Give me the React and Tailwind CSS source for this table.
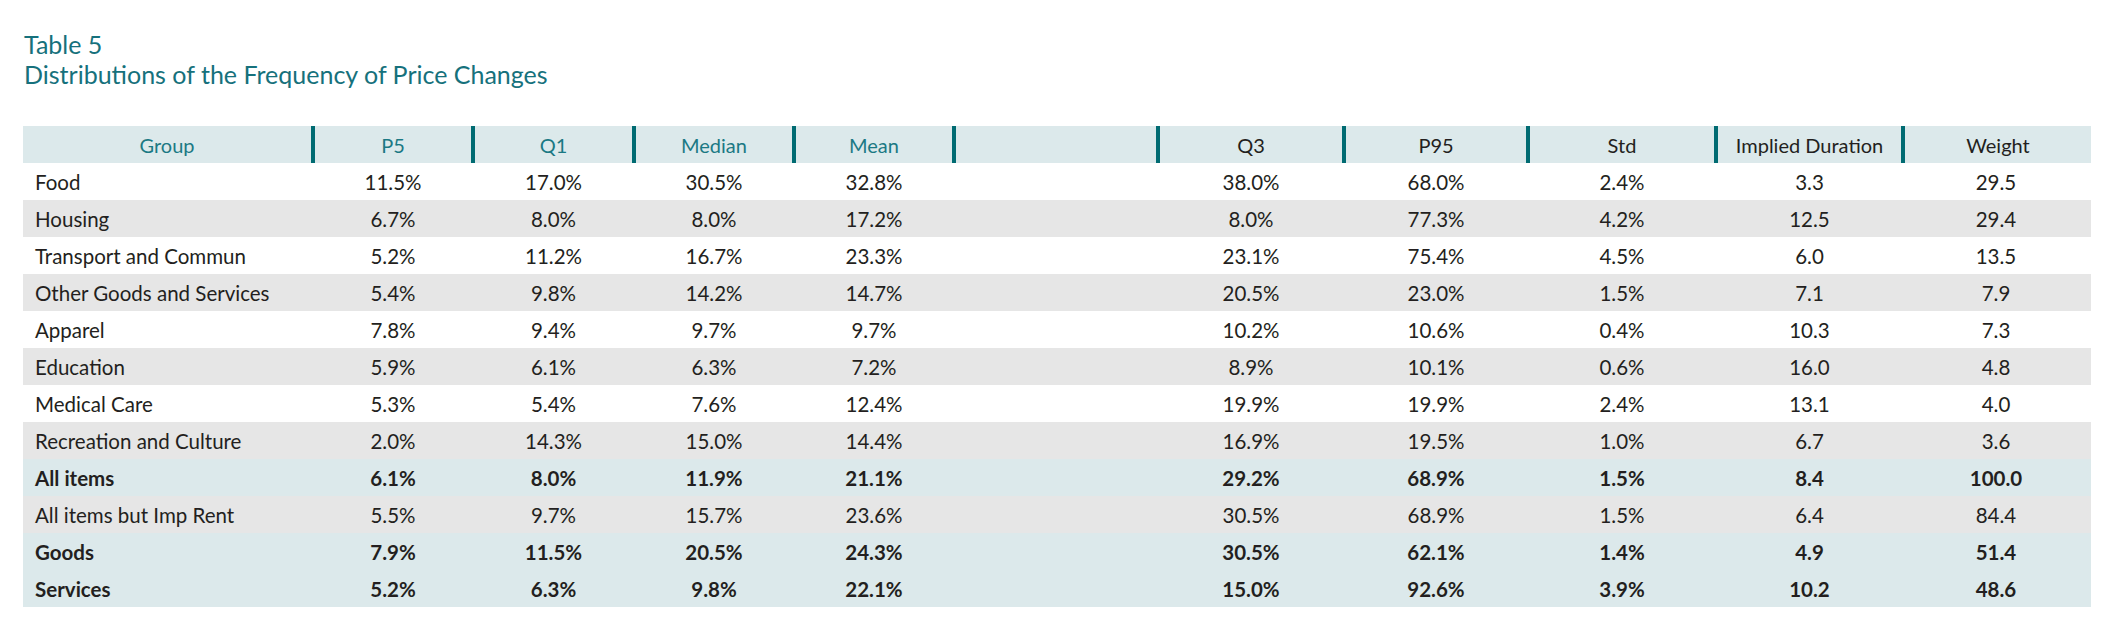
import React from "react";

const rows = [
  { g: "Food", v: ["11.5%", "17.0%", "30.5%", "32.8%", "38.0%", "68.0%", "2.4%", "3.3", "29.5"], bg: "white" },
  { g: "Housing", v: ["6.7%", "8.0%", "8.0%", "17.2%", "8.0%", "77.3%", "4.2%", "12.5", "29.4"], bg: "gray" },
  { g: "Transport and Commun", v: ["5.2%", "11.2%", "16.7%", "23.3%", "23.1%", "75.4%", "4.5%", "6.0", "13.5"], bg: "white" },
  { g: "Other Goods and Services", v: ["5.4%", "9.8%", "14.2%", "14.7%", "20.5%", "23.0%", "1.5%", "7.1", "7.9"], bg: "gray" },
  { g: "Apparel", v: ["7.8%", "9.4%", "9.7%", "9.7%", "10.2%", "10.6%", "0.4%", "10.3", "7.3"], bg: "white" },
  { g: "Education", v: ["5.9%", "6.1%", "6.3%", "7.2%", "8.9%", "10.1%", "0.6%", "16.0", "4.8"], bg: "gray" },
  { g: "Medical Care", v: ["5.3%", "5.4%", "7.6%", "12.4%", "19.9%", "19.9%", "2.4%", "13.1", "4.0"], bg: "white" },
  { g: "Recreation and Culture", v: ["2.0%", "14.3%", "15.0%", "14.4%", "16.9%", "19.5%", "1.0%", "6.7", "3.6"], bg: "gray" },
  { g: "All items", v: ["6.1%", "8.0%", "11.9%", "21.1%", "29.2%", "68.9%", "1.5%", "8.4", "100.0"], bg: "teal", bold: true },
  { g: "All items but Imp Rent", v: ["5.5%", "9.7%", "15.7%", "23.6%", "30.5%", "68.9%", "1.5%", "6.4", "84.4"], bg: "gray" },
  { g: "Goods", v: ["7.9%", "11.5%", "20.5%", "24.3%", "30.5%", "62.1%", "1.4%", "4.9", "51.4"], bg: "teal", bold: true },
  { g: "Services", v: ["5.2%", "6.3%", "9.8%", "22.1%", "15.0%", "92.6%", "3.9%", "10.2", "48.6"], bg: "teal", bold: true },
];

const bgClass = {
  white: "bg-white",
  gray: "bg-[#e6e6e6]",
  teal: "bg-[#dce9eb]",
};

const headers = [
  { t: "Group", teal: true },
  { t: "P5", teal: true },
  { t: "Q1", teal: true },
  { t: "Median", teal: true },
  { t: "Mean", teal: true },
  { t: "", teal: true },
  { t: "Q3", teal: false },
  { t: "P95", teal: false },
  { t: "Std", teal: false },
  { t: "Implied Duration", teal: false },
  { t: "Weight", teal: false },
];

const grid =
  "grid grid-cols-[292px_160px_161px_160px_160px_204px_186px_184px_188px_187px_186px]";

export default function App() {
  return (
    <div
      className="min-h-[631px] w-[2115px] bg-white pl-[23px] pt-[29px] text-[#231f20]"
      style={{ fontFamily: "Lato, 'Liberation Sans', sans-serif" }}
    >
      <div className="pl-[1px] text-[25px] leading-[30px] text-[#16717c]">
        <div>Table 5</div>
        <div>Distributions of the Frequency of Price Changes</div>
      </div>

      <div className="mt-[37px] w-[2068px]">
        <div className={`${grid} h-[37px] bg-[#dce9eb] text-[20px]`}>
          {headers.map((h, i) => (
            <div
              key={i}
              className={`flex items-center justify-center ${
                i < headers.length - 1 ? "border-r-4 border-[#006b72]" : ""
              } ${h.teal ? "text-[#1b7984]" : "text-[#231f20]"}`}
            >
              {h.t}
            </div>
          ))}
        </div>

        {rows.map((r, ri) => (
          <div
            key={ri}
            className={`${grid} h-[37px] text-[20.5px] ${bgClass[r.bg]} ${
              r.bold ? "font-bold" : ""
            }`}
          >
            <div className="flex items-center pl-[12px] pt-[2px]">{r.g}</div>
            {r.v.slice(0, 4).map((c, ci) => (
              <div key={ci} className="flex items-center justify-center pr-[4px] pt-[2px]">
                {c}
              </div>
            ))}
            <div />
            {r.v.slice(4).map((c, ci) => (
              <div key={ci + 4} className="flex items-center justify-center pr-[4px] pt-[2px]">
                {c}
              </div>
            ))}
          </div>
        ))}
      </div>
    </div>
  );
}
